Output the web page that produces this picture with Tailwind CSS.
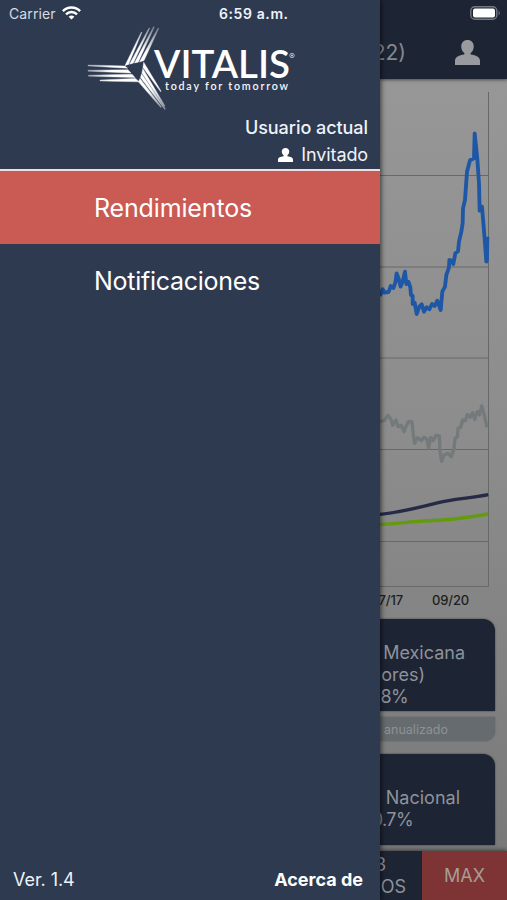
<!DOCTYPE html>
<html lang="es">
<head>
<meta charset="utf-8">
<title>Vitalis</title>
<script src="https://cdn.jsdelivr.net/npm/@tailwindcss/browser@4"></script>
</head>
<body class="overflow-hidden">
<div class="flex h-[900px] w-[507px] overflow-hidden bg-[#2e3a50] font-['Inter','Liberation_Sans',sans-serif] text-[#eef3fa]">

  <!-- Drawer -->
  <aside class="relative z-10 flex w-[380px] shrink-0 flex-col bg-[#2e3a50] shadow-[1px_0_5px_rgba(0,0,0,0.65)]">
    <div class="flex h-7 items-center pl-[9px]">
      <span class="w-[53px] text-[14px] leading-7 tracking-[0.1px] text-[#d5dce6]">Carrier</span>
      <svg class="-mt-[2px] h-[14px] w-[19px]" viewBox="0 0 19 14" fill="none" stroke="#fff" stroke-width="2.5">
        <path d="M.9 5.1C5.7 .3 13.3 .3 18.1 5.1"/>
        <path d="M4 8.3C7.1 5.3 11.9 5.3 15 8.3"/>
        <path d="M6.6 10.7Q9.5 8.2 12.4 10.7L9.5 13.6Z" fill="#fff" stroke="none"/>
      </svg>
      <span class="ml-[138px] text-[14px] font-semibold leading-7 tracking-[0.6px] whitespace-nowrap">6:59 a.m.</span>
    </div>

    <svg class="h-[84px] w-[380px]" viewBox="0 28 380 84" overflow="visible">
      <defs>
        <linearGradient id="up" gradientUnits="userSpaceOnUse" x1="130" y1="65" x2="150" y2="27"><stop offset=".45" stop-color="#fff"/><stop offset="1" stop-color="#fff" stop-opacity=".35"/></linearGradient>
        <linearGradient id="left" gradientUnits="userSpaceOnUse" x1="136" y1="0" x2="88" y2="0"><stop offset=".5" stop-color="#fff"/><stop offset="1" stop-color="#fff" stop-opacity=".5"/></linearGradient>
        <linearGradient id="down" gradientUnits="userSpaceOnUse" x1="142" y1="66" x2="165" y2="108"><stop offset=".5" stop-color="#fff"/><stop offset="1" stop-color="#fff" stop-opacity=".4"/></linearGradient>
      </defs>
      <g fill="url(#up)" stroke="url(#up)" stroke-width=".4">
        <path d="M125 65.500 141.300 32 142 32.300 128.500 64.500Z"/>
        <path d="M129.500 64.200 149 27.800 149.800 28.200 133.200 63.200Z"/>
        <path d="M134.400 63 153.600 26.500 154.400 27 138.200 62.200Z"/>
        <path d="M139.400 62 158 28 158.800 28.500 144 60.600Z"/>
      </g>
      <g fill="url(#left)" stroke="url(#left)" stroke-width=".4">
        <path d="M88 65.900V65L125 66 127.500 68.200Z"/>
        <path d="M88 71.200V70.200L128 69.800 131 73Z"/>
        <path d="M88.500 76.200V75.200L132 74.200 135 77.500Z"/>
        <path d="M100 81V80L135.500 78.400 139 81.800Z"/>
      </g>
      <g fill="url(#down)" stroke="url(#down)" stroke-width=".4">
        <path d="M143.700 62.300 161.200 91.200 160.600 91.700 143 67.500Z"/>
        <path d="M142.800 68.500 165 106 164.200 106.500 141.900 73Z"/>
        <path d="M141.600 73.800 165.500 109 164.700 109.500 140.500 77.400Z"/>
        <path d="M140 78.400 161.500 107 160.800 107.600 138.400 81.800Z"/>
      </g>
      <text x="154" y="77.500" textLength="136" lengthAdjust="spacingAndGlyphs" font-family="Lato, sans-serif" font-size="37.500" font-weight="600" fill="#fff">VITALIS</text>
      <text x="165" y="89.600" textLength="123" lengthAdjust="spacing" font-family="Lato, sans-serif" font-size="10.700" font-weight="600" fill="#f5f7fb">today for tomorrow</text>
      <circle cx="292" cy="55.500" r="2.200" fill="none" stroke="#cbd2dc" stroke-width=".8"/>
      <circle cx="292" cy="55.500" r="1" fill="#cbd2dc"/>
    </svg>

    <div class="flex h-[57px] flex-col items-end pr-[12px] pt-[3px]">
      <div class="text-[18px] font-medium leading-[26px] tracking-[-0.05px]">Usuario actual</div>
      <div class="flex items-center text-[18px] leading-[27px] tracking-[-0.1px]">
        <svg class="mr-[8px] h-[14px] w-[15px]" viewBox="0 0 24 24" fill="#fff" preserveAspectRatio="none"><path d="M12 0C8.400 0 6 2.600 6 6.200c0 2.800 1.300 5.100 3.100 6.500L8.800 14C4 14.800 0 16.200 0 20v4h24v-4c0-3.800-4-5.200-8.800-6l-.3-1.300C16.700 11.300 18 9 18 6.200 18 2.600 15.600 0 12 0Z"/></svg>
        <span>Invitado</span>
      </div>
    </div>

    <nav class="text-[25px] text-white">
      <div class="h-[75px] border-t-2 border-[#f1dcdf] bg-[#ca5a54] pl-[94px] pt-[1px] leading-[73px] tracking-[-0.15px]">Rendimientos</div>
      <div class="h-[74px] pl-[94px] leading-[75px] tracking-[-0.27px]">Notificaciones</div>
    </nav>

    <div class="mt-auto flex h-[42px] items-center justify-between pl-[13px] pr-[17px] text-[18px]">
      <span class="tracking-[-0.05px]">Ver. 1.4</span>
      <span class="font-bold text-white">Acerca de</span>
    </div>
  </aside>

  <!-- Dimmed content -->
  <main class="flex w-[127px] shrink-0 flex-col bg-linear-to-b from-[#999] via-[#8c8c8c] to-[#777] text-[#a5a8ad]">
    <header class="z-[1] flex h-[79px] flex-col bg-[#1d2433] shadow-[0_1px_3px_rgba(0,0,0,0.5)]">
      <div class="flex h-[26px] justify-end pr-[6px] pt-[6px]">
        <svg class="h-[14px] w-[31px]" viewBox="0 0 31 14"><rect x=".8" y=".8" width="26" height="12.400" rx="4" fill="none" stroke="#747884" stroke-width="1.400"/><rect x="3" y="2.500" width="22" height="9" rx="2" fill="#fff"/><path d="M28.600 4.500Q31 7 28.600 9.500Z" fill="#747884"/></svg>
      </div>
      <div class="flex h-[53px] items-center">
        <div class="flex w-[26px] justify-end overflow-hidden text-[21px] whitespace-nowrap text-[#85888e]"><span>(2022)</span></div>
        <svg class="ml-[49px] h-[25px] w-[25px]" viewBox="0 0 24 24" fill="#999a9e" preserveAspectRatio="none"><path d="M12 0C8.400 0 6 2.600 6 6.200c0 2.800 1.300 5.100 3.100 6.500L8.800 14C4 14.800 0 16.200 0 20v4h24v-4c0-3.800-4-5.200-8.800-6l-.3-1.300C16.700 11.300 18 9 18 6.200 18 2.600 15.600 0 12 0Z"/></svg>
      </div>
    </header>

    <svg class="h-[509px] w-[127px] shrink-0" viewBox="380 79 127 509" fill="none">
      <path d="M380 175.500H488.500M380 267H488.500M380 358H488.500M380 449.500H488.500M380 541.500H488.500M380 586.500H488.500M488.500 92V587" stroke="#666968"/>
      <g stroke-linejoin="round" transform="translate(370 90) scale(.33333)" stroke-width="10">
        <path stroke="#1e57a5" stroke-width="11.500" d="M30 618 38 598 44 608 56 606 62 588 70 594 76 578 80 550 87 570 92 590 98 574 105 545 109 582 115 575 121 592 123 615 128 618 128 642 134 638 140 672 148 650 155 643 162 665 170 652 178 658 186 642 194 648 202 632 212 660 217 605 225 590 229 555 237 532 238 510 246 512 250 522 256 490 264 484 267 455 274 425 278 400 279 355 285 330 291 245 300 211 312 205 314 130 322 207 327 280 329 362 336 350 341 410 345 460 349 515 351 510 352 440"/>
        <path stroke="#747a7b" transform="translate(0 870)" d="M30 125 42 122 54 106 64 120 68 136 78 120 84 140 94 136 102 155 110 135 116 124 126 126 130 165 134 190 142 173 154 182 162 172 170 176 176 204 182 172 190 182 198 166 208 168 210 215 215 244 222 225 234 220 244 230 252 205 255 175 262 172 264 145 272 142 278 120 286 122 292 104 300 112 308 98 314 118 322 95 329 105 335 78 343 105 347 125 351 142"/>
        <path stroke="#252a47" transform="translate(0 870)" d="M30 403C90 397 155 381 205 368 250 357 300 355 355 344"/>
        <path stroke="#649a0c" transform="translate(0 870)" d="M30 433C80 433 125 424 160 423 230 421 290 414 355 402"/>
      </g>
    </svg>
    <div class="flex h-[26px] text-[13px] font-medium leading-[25px] tracking-[-0.15px] text-[#1e1f20]">
      <div class="flex w-[23px] justify-end overflow-hidden"><span>07/17</span></div>
      <span class="ml-[29px]">09/20</span>
    </div>

    <section class="mt-[5px] mr-[12px] flex flex-col text-[18px] leading-[22px] text-[#8e929b]">
      <div class="h-[92px] rounded-tr-[12px] bg-[#1d2433] pt-[23px] shadow-[0_0_2px_rgba(0,0,0,0.6)]">
        <div class="flex w-[85px] justify-end overflow-hidden whitespace-nowrap"><span>Bolsa Mexicana</span></div>
        <div class="flex w-[45px] justify-end overflow-hidden whitespace-nowrap"><span>de Valores)</span></div>
        <div class="flex w-[28px] justify-end overflow-hidden whitespace-nowrap tracking-[-0.6px]"><span>8%</span></div>
      </div>
      <div class="mt-[6px] flex h-[24px] rounded-br-[10px] bg-[#656b6e] text-[12.500px] leading-[25px] tracking-[0px] text-[#8d9295] shadow-[0_0_2px_rgba(0,0,0,0.3)]">
        <div class="flex w-[68px] justify-end overflow-hidden whitespace-nowrap"><span>Rendimiento anualizado</span></div>
      </div>
      <div class="mt-[13px] h-[91px] rounded-tr-[12px] bg-[#1d2433] pt-[33px] shadow-[0_0_2px_rgba(0,0,0,0.6)]">
        <div class="flex w-[80px] justify-end overflow-hidden whitespace-nowrap"><span>Sistema Nacional</span></div>
        <div class="flex w-[33px] justify-end overflow-hidden whitespace-nowrap tracking-[-0.6px]"><span>10.7%</span></div>
      </div>
    </section>

    <footer class="mt-auto flex h-[49px] text-[18px] text-[#8e929b] shadow-[0_-1px_4px_rgba(0,0,0,0.5)]">
      <div class="flex w-[42px] flex-col overflow-hidden bg-[#1d2433] pt-[3px] leading-[22px]">
        <div class="flex w-[6px] justify-end"><span>3</span></div>
        <div class="flex w-[26px] justify-end"><span>AÑOS</span></div>
      </div>
      <div class="flex flex-1 items-center justify-center bg-[#7e3434] text-[#a89d95]">MAX</div>
    </footer>
  </main>
</div>
</body>
</html>
